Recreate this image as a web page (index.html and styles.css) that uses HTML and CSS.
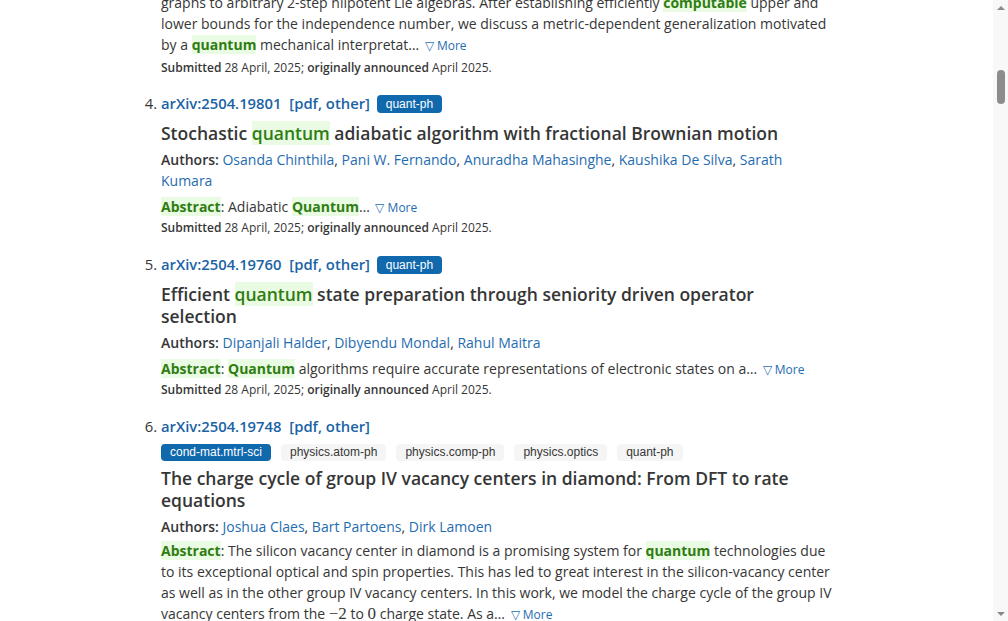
FILE: index.html
```html
<!DOCTYPE html>
<html lang="en">
<head>
<meta charset="utf-8">
<title>arXiv search results</title>
<link rel="stylesheet" href="styles.css">
</head>
<body>
<div class="page">
  <div class="view">
    <ol class="results" start="3">
      <li class="result tail">
        <p class="abstract">graphs to arbitrary 2-step nilpotent Lie algebras. After establishing efficiently <span class="hl">computable</span> upper and lower bounds for the independence number, we discuss a metric-dependent generalization motivated by a <span class="hl">quantum</span> mechanical interpretat&hellip; <a class="more" href="#">&#9661;&nbsp;More</a></p>
        <p class="submitted"><b>Submitted</b> 28 April, 2025; <b>originally announced</b> April 2025.</p>
      </li>
      <li class="result">
        <div class="idline"><a class="id" href="#">arXiv:2504.19801</a> <span class="links">[<a href="#">pdf</a>, <a href="#">other</a>]</span> <span class="tag primary">quant-ph</span></div>
        <p class="title">Stochastic <span class="hlt">quantum</span> adiabatic algorithm with fractional Brownian motion</p>
        <p class="authors"><b>Authors:</b> <a href="#">Osanda Chinthila</a>, <a href="#">Pani W. Fernando</a>, <a href="#">Anuradha Mahasinghe</a>, <a href="#">Kaushika De Silva</a>, <a href="#">Sarath Kumara</a></p>
        <p class="abstract"><span class="hl">Abstract</span>: Adiabatic <span class="hl">Quantum</span>&hellip; <a class="more" href="#">&#9661;&nbsp;More</a></p>
        <p class="submitted"><b>Submitted</b> 28 April, 2025; <b>originally announced</b> April 2025.</p>
      </li>
      <li class="result">
        <div class="idline"><a class="id" href="#">arXiv:2504.19760</a> <span class="links">[<a href="#">pdf</a>, <a href="#">other</a>]</span> <span class="tag primary">quant-ph</span></div>
        <p class="title">Efficient <span class="hlt">quantum</span> state preparation through seniority driven operator selection</p>
        <p class="authors"><b>Authors:</b> <a href="#">Dipanjali Halder</a>, <a href="#">Dibyendu Mondal</a>, <a href="#">Rahul Maitra</a></p>
        <p class="abstract"><span class="hl">Abstract</span>: <span class="hl">Quantum</span> algorithms require accurate representations of electronic states on a&hellip; <a class="more" href="#">&#9661;&nbsp;More</a></p>
        <p class="submitted"><b>Submitted</b> 28 April, 2025; <b>originally announced</b> April 2025.</p>
      </li>
      <li class="result">
        <div class="idline"><a class="id" href="#">arXiv:2504.19748</a> <span class="links">[<a href="#">pdf</a>, <a href="#">other</a>]</span></div>
        <div class="tags">
          <span class="tag primary">cond-mat.mtrl-sci</span>
          <span class="tag">physics.atom-ph</span>
          <span class="tag">physics.comp-ph</span>
          <span class="tag">physics.optics</span>
          <span class="tag">quant-ph</span>
        </div>
        <p class="title">The charge cycle of group IV vacancy centers in diamond: From DFT to rate equations</p>
        <p class="authors tight"><b>Authors:</b> <a href="#">Joshua Claes</a>, <a href="#">Bart Partoens</a>, <a href="#">Dirk Lamoen</a></p>
        <p class="abstract"><span class="hl">Abstract</span>: The silicon vacancy center in diamond is a promising system for <span class="hl">quantum</span> technologies due to its exceptional optical and spin properties. This has led to great interest in the silicon-vacancy center as well as in the other group IV vacancy centers. In this work, we model the charge cycle of the group IV vacancy centers from the <span class="math">&minus;2</span> to <span class="math">0</span> charge state. As a&hellip; <a class="more" href="#">&#9661;&nbsp;More</a></p>
        <p class="submitted"><b>Submitted</b> 28 April, 2025; <b>originally announced</b> April 2025.</p>
      </li>
    </ol>
  </div>
  <div class="scrollbar">
    <div class="arrow up"></div>
    <div class="track"><div class="thumb"></div></div>
    <div class="arrow down"></div>
  </div>
</div>
</body>
</html>
```
FILE: styles.css
```css
html, body {
  margin: 0;
  padding: 0;
  background: #ffffff;
}
body {
  font-family: "Open Sans", "Liberation Sans", sans-serif;
  color: #363636;
}
.page {
  display: flex;
  height: 621px;
  overflow: hidden;
}
.view {
  flex: 1;
  overflow: hidden;
}
.results {
  margin: -8px 0 0 161px;
  padding: 0;
  width: 674px;
  list-style: decimal outside;
}
.result {
  margin: 0 0 17px 0;
  font-size: 14.8px;
}
.result::marker {
  color: #363636;
}
.tail {
  margin-bottom: 16px;
}
.tail::marker {
  content: "";
}
.result p {
  margin: 0;
}
a {
  color: #1f6cb0;
  text-decoration: none;
}
.idline {
  line-height: 21px;
  font-size: 14.8px;
  margin-bottom: 8px;
}
.id {
  font-weight: 600;
  color: #1a63a5;
}
.links {
  margin-left: 4px;
  color: #1a63a5;
  font-weight: 600;
}
.links a {
  color: #1a63a5;
}
.tag {
  display: inline-block;
  font-family: "Liberation Sans", Arial, sans-serif;
  font-size: 12px;
  line-height: 17px;
  padding: 0 9px;
  border-radius: 4px;
  background: #f5f5f5;
  color: #363636;
  vertical-align: 1px;
}
.tag.primary {
  background: #1068ad;
  color: #ffffff;
  font-weight: 500;
}
.idline .tag {
  margin-left: 3px;
  line-height: 18px;
}
.tags {
  display: flex;
  gap: 10px;
  margin: -1px 0 6px;
}
.title {
  font-size: 17.5px;
  font-weight: 600;
  line-height: 22px;
  color: #363636;
  padding-right: 24px;
  margin-bottom: 5px !important;
}
.hlt {
  background: #e9fbe3;
  color: #2f7d12;
}
.authors {
  font-size: 14px;
  line-height: 21px;
  margin-bottom: 5px !important;
}
.authors.tight {
  margin-bottom: 3px !important;
}
.authors b {
  font-weight: 600;
}
.abstract {
  font-size: 14px;
  line-height: 21px;
}
.hl {
  background: #e9fbe3;
  color: #2f7d12;
  font-weight: 700;
}
.more {
  font-size: 12px;
  margin-left: 2px;
}
.math {
  font-family: "Liberation Serif", "DejaVu Serif", serif;
  font-size: 17px;
}
.submitted {
  font-size: 12px;
  line-height: 18px;
  margin-top: 1px !important;
}
.tail .submitted {
  margin-top: 3px !important;
}
.submitted b {
  font-weight: 600;
}
.scrollbar {
  width: 15px;
  flex: none;
  display: flex;
  flex-direction: column;
  background: #f8f8f8;
}
.arrow {
  height: 15px;
  flex: none;
  display: flex;
  justify-content: center;
  align-items: center;
}
.arrow::before {
  content: "";
  border-left: 4px solid transparent;
  border-right: 4px solid transparent;
}
.arrow.up::before {
  border-bottom: 4px solid #8a8a8a;
}
.arrow.down::before {
  border-top: 4px solid #8a8a8a;
}
.track {
  flex: 1;
  padding-top: 55px;
}
.thumb {
  width: 8px;
  height: 34px;
  margin-left: 4px;
  border-radius: 4px;
  background: #8c8c8c;
}
```
